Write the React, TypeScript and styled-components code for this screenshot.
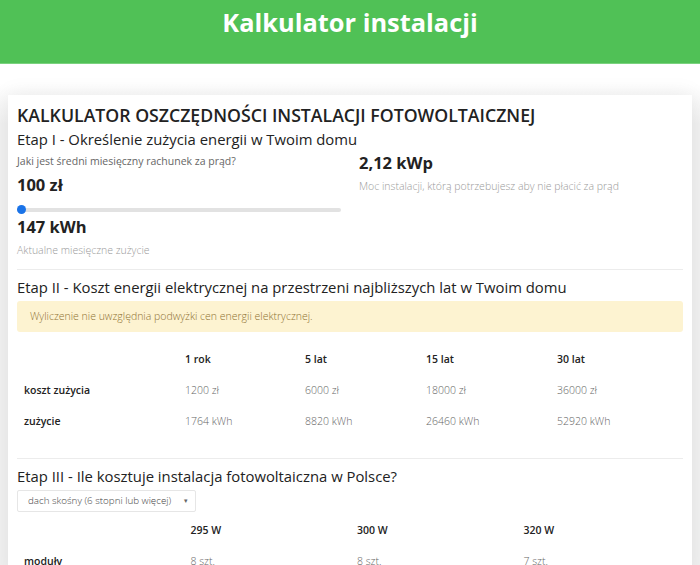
import styled, { createGlobalStyle } from "styled-components";

const GlobalStyle = createGlobalStyle`
  html, body {
    margin: 0;
    padding: 0;
    background: #f1f1f1;
    font-family: "Open Sans", "Liberation Sans", sans-serif;
    color: #222;
  }
  * { box-sizing: border-box; }
`;

const costHeaders = ["1 rok", "5 lat", "15 lat", "30 lat"];
const costWidths = [161, 120, 121, 131];
const costRows = [
  { label: "koszt zużycia", values: ["1200 zł", "6000 zł", "18000 zł", "36000 zł"] },
  { label: "zużycie", values: ["1764 kWh", "8820 kWh", "26460 kWh", "52920 kWh"] },
];

const moduleHeaders = ["295 W", "300 W", "320 W"];
const moduleRows = [{ label: "moduły", values: ["8 szt.", "8 szt.", "7 szt."] }];

const Header = styled.header`
  background: #50c156;
  height: 64px;
  padding-top: 4px;
  text-align: center;
  border-bottom: 1px solid #7ad27e;
`;

const HeaderTitle = styled.h1`
  margin: 0;
  color: #fff;
  font-size: 25.4px;
  font-weight: 700;
  line-height: 36px;
`;

const Page = styled.main`
  background: linear-gradient(#fff 0, #fff 20px, #f1f1f1 60px);
  padding: 31px 8px 0;
`;

const Card = styled.section`
  background: #fff;
  padding: 8px 9px 0;
  box-shadow: 0 0 20px rgba(0, 0, 0, 0.08);
`;

const Title = styled.h2`
  margin: 0;
  font-size: 17.7px;
  font-weight: 600;
  line-height: 25px;
  color: #222;
`;

const StageTitle = styled.h3`
  margin: 0;
  font-size: 14.85px;
  font-weight: 400;
  line-height: 22px;
  color: #222;
`;

const Columns = styled.div`
  display: grid;
  grid-template-columns: 1fr 1fr;
  margin-top: 3px;
`;

const Column = styled.div<{ $right?: boolean }>`
  padding: ${(p) => (p.$right ? "0 0 0 9px" : "0 9px 0 0")};
  margin-top: ${(p) => (p.$right ? "-6px" : "0")};
`;

const Hint = styled.p<{ $muted?: boolean }>`
  margin: 0;
  font-size: 10.5px;
  line-height: 16px;
  font-weight: ${(p) => (p.$muted ? 300 : 400)};
  color: ${(p) => (p.$muted ? "#9a9a9a" : "#666")};
`;

const BigValue = styled.div`
  margin-top: 1px;
  font-size: 16.5px;
  font-weight: 700;
  line-height: 30px;
  color: #222;
`;

const ConsumptionValue = styled(BigValue)`
  margin-top: 0;
`;

const Slider = styled.input`
  -webkit-appearance: none;
  appearance: none;
  display: block;
  width: 100%;
  height: 4px;
  margin: 7.5px 0 0;
  border-radius: 2px;
  background: #e2e2e2;
  outline: none;

  &::-webkit-slider-thumb {
    -webkit-appearance: none;
    width: 9px;
    height: 9px;
    border-radius: 50%;
    background: #1a73e8;
    border: none;
  }
`;

const Divider = styled.hr<{ $top: number }>`
  border: 0;
  border-top: 1px solid #ececec;
  margin: ${(p) => p.$top}px 0 6px;
`;

const Alert = styled.div`
  margin-top: 3px;
  background: #fdf3d1;
  color: #8f7232;
  border-radius: 3px;
  font-size: 10.5px;
  font-weight: 300;
  line-height: 16px;
  padding: 7.5px 13px;
`;

const Table = styled.table<{ $top: number; $bottom: number }>`
  width: 100%;
  border-collapse: collapse;
  margin-top: ${(p) => p.$top}px;
  margin-bottom: ${(p) => p.$bottom}px;
  table-layout: fixed;
`;

const HeadCell = styled.th<{ $width?: number }>`
  width: ${(p) => (p.$width ? `${p.$width}px` : "auto")};
  text-align: left;
  font-size: 10.5px;
  font-weight: 600;
  color: #222;
  padding: 7px;
  line-height: 17px;
`;

const LabelCell = styled.th`
  text-align: left;
  font-size: 10.5px;
  font-weight: 600;
  color: #222;
  padding: 7px;
  line-height: 17.5px;
`;

const ValueCell = styled.td`
  font-size: 10.5px;
  font-weight: 300;
  color: #666;
  padding: 7px;
  line-height: 17.5px;
`;

const Select = styled.div`
  display: inline-flex;
  align-items: center;
  gap: 13px;
  margin-top: 3px;
  height: 22px;
  padding: 0 7px 0 10px;
  border: 1px solid #e6e6e6;
  border-radius: 2px;
  font-size: 9.8px;
  font-weight: 300;
  color: #444;
  background: #fff;

  &::after {
    content: "▾";
    font-size: 7px;
    color: #666;
  }
`;

export default function App() {
  return (
    <>
      <GlobalStyle />
      <Header>
        <HeaderTitle>Kalkulator instalacji</HeaderTitle>
      </Header>
      <Page>
        <Card>
          <Title>KALKULATOR OSZCZĘDNOŚCI INSTALACJI FOTOWOLTAICZNEJ</Title>
          <StageTitle>Etap I - Określenie zużycia energii w Twoim domu</StageTitle>
          <Columns>
            <Column>
              <Hint>Jaki jest średni miesięczny rachunek za prąd?</Hint>
              <BigValue>100 zł</BigValue>
              <Slider type="range" min={100} max={1000} defaultValue={100} />
              <ConsumptionValue>147 kWh</ConsumptionValue>
              <Hint $muted>Aktualne miesięczne zużycie</Hint>
            </Column>
            <Column $right>
              <BigValue>2,12 kWp</BigValue>
              <Hint $muted>Moc instalacji, którą potrzebujesz aby nie płacić za prąd</Hint>
            </Column>
          </Columns>
          <Divider $top={11} />
          <StageTitle>Etap II - Koszt energii elektrycznej na przestrzeni najbliższych lat w Twoim domu</StageTitle>
          <Alert>Wyliczenie nie uwzględnia podwyżki cen energii elektrycznej.</Alert>
          <Table $top={12} $bottom={20}>
            <thead>
              <tr>
                <HeadCell $width={costWidths[0]} />
                {costHeaders.map((h, i) => (
                  <HeadCell key={h} $width={costWidths[i + 1]}>
                    {h}
                  </HeadCell>
                ))}
              </tr>
            </thead>
            <tbody>
              {costRows.map((row) => (
                <tr key={row.label}>
                  <LabelCell>{row.label}</LabelCell>
                  {row.values.map((v) => (
                    <ValueCell key={v}>{v}</ValueCell>
                  ))}
                </tr>
              ))}
            </tbody>
          </Table>
          <Divider $top={0} />
          <StageTitle>Etap III - Ile kosztuje instalacja fotowoltaiczna w Polsce?</StageTitle>
          <Select>dach skośny (6 stopni lub więcej)</Select>
          <Table $top={3} $bottom={0}>
            <thead>
              <tr>
                <HeadCell />
                {moduleHeaders.map((h) => (
                  <HeadCell key={h}>{h}</HeadCell>
                ))}
              </tr>
            </thead>
            <tbody>
              {moduleRows.map((row) => (
                <tr key={row.label}>
                  <LabelCell>{row.label}</LabelCell>
                  {row.values.map((v) => (
                    <ValueCell key={v}>{v}</ValueCell>
                  ))}
                </tr>
              ))}
            </tbody>
          </Table>
        </Card>
      </Page>
    </>
  );
}
